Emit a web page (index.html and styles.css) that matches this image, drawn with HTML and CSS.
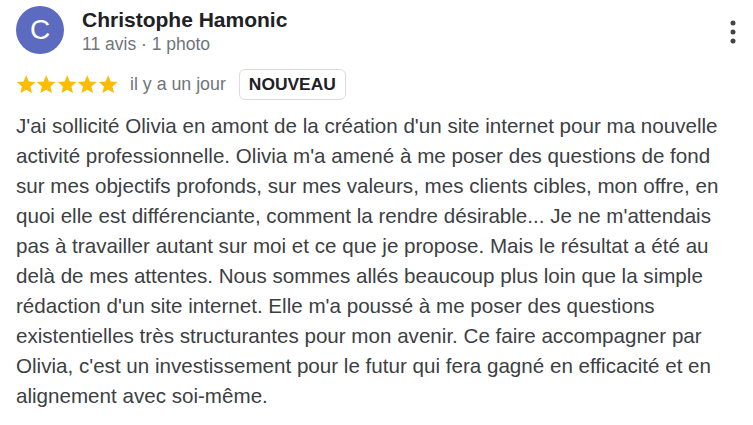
FILE: index.html
```html
<!DOCTYPE html>
<html lang="fr">
<head>
<meta charset="utf-8">
<link rel="stylesheet" href="styles.css">
</head>
<body>
<div class="review">
  <div class="head">
    <div class="avatar">C</div>
    <div class="who">
      <div class="name">Christophe Hamonic</div>
      <div class="meta">11 avis · 1 photo</div>
    </div>
    <svg class="more" width="6" height="24" viewBox="0 0 6 24"><circle cx="3" cy="3" r="2.5" fill="#444"/><circle cx="3" cy="12" r="2.5" fill="#444"/><circle cx="3" cy="21" r="2.5" fill="#444"/></svg>
  </div>
  <div class="rating">
    <div class="stars">
      <svg viewBox="0 0 24 24" width="20.4" height="20.4"><path fill="#fbbc04" d="M12 1.5l3.1 7.3 7.9.7-6 5.2 1.8 7.8L12 18.4l-6.8 4.1L7 14.7l-6-5.2 7.9-.7z"/></svg>
      <svg viewBox="0 0 24 24" width="20.4" height="20.4"><path fill="#fbbc04" d="M12 1.5l3.1 7.3 7.9.7-6 5.2 1.8 7.8L12 18.4l-6.8 4.1L7 14.7l-6-5.2 7.9-.7z"/></svg>
      <svg viewBox="0 0 24 24" width="20.4" height="20.4"><path fill="#fbbc04" d="M12 1.5l3.1 7.3 7.9.7-6 5.2 1.8 7.8L12 18.4l-6.8 4.1L7 14.7l-6-5.2 7.9-.7z"/></svg>
      <svg viewBox="0 0 24 24" width="20.4" height="20.4"><path fill="#fbbc04" d="M12 1.5l3.1 7.3 7.9.7-6 5.2 1.8 7.8L12 18.4l-6.8 4.1L7 14.7l-6-5.2 7.9-.7z"/></svg>
      <svg viewBox="0 0 24 24" width="20.4" height="20.4"><path fill="#fbbc04" d="M12 1.5l3.1 7.3 7.9.7-6 5.2 1.8 7.8L12 18.4l-6.8 4.1L7 14.7l-6-5.2 7.9-.7z"/></svg>
    </div>
    <span class="date">il y a un jour</span>
    <span class="badge">NOUVEAU</span>
  </div>
  <p class="text">J'ai sollicité Olivia en amont de la création d'un site internet pour ma nouvelle activité professionnelle. Olivia m'a amené à me poser des questions de fond sur mes objectifs profonds, sur mes valeurs, mes clients cibles, mon offre, en quoi elle est différenciante, comment la rendre désirable... Je ne m'attendais pas à travailler autant sur moi et ce que je propose. Mais le résultat a été au delà de mes attentes. Nous sommes allés beaucoup plus loin que la simple rédaction d'un site internet. Elle m'a poussé à me poser des questions existentielles très structurantes pour mon avenir. Ce faire accompagner par Olivia, c'est un investissement pour le futur qui fera gagné en efficacité et en alignement avec soi-même.</p>
</div>
</body>
</html>
```
FILE: styles.css
```css
html, body { margin: 0; padding: 0; background: #fff; }
body { font-family: "Liberation Sans", Arial, sans-serif; width: 753px; height: 425px; overflow: hidden; }
.review { padding: 6px 16px 0 16px; }
.head { display: flex; align-items: flex-start; }
.avatar {
  width: 48px; height: 48px; border-radius: 50%;
  background: #5c6bc0; color: #fff;
  display: flex; align-items: center; justify-content: center;
  font-size: 28px; flex: none;
}
.who { margin-left: 18px; padding-top: 1px; flex: 1; }
.name { font-size: 21px; font-weight: bold; color: #202124; line-height: 26px; }
.meta { font-size: 17.5px; color: #70757a; line-height: 22px; }
.more { margin-top: 14px; margin-right: 1px; }
.rating { display: flex; align-items: center; margin-top: 14px; }
.stars { display: flex; }
.stars svg { display: block; }
.date { margin-left: 12px; font-size: 17.8px; color: #70757a; }
.badge {
  margin-left: 13px; border: 1px solid #dadce0; border-radius: 6px;
  height: 29px; padding: 0 9px; display: flex; align-items: center;
  font-size: 17.4px; font-weight: bold; color: #202124;
}
.text {
  margin: 11px 0 0 0; font-size: 20.6px; line-height: 30px; color: #3c4043;
}
```
